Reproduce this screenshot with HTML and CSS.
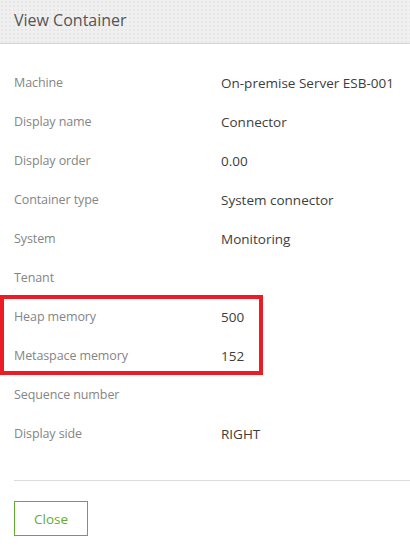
FILE: index.html
```html
<!DOCTYPE html>
<html>
<head>
<meta charset="utf-8">
<link rel="stylesheet" href="styles.css">
</head>
<body>
<div class="dialog">
  <div class="header"><h1 class="title">View Container</h1></div>
  <div class="body">
    <div class="row"><span class="label">Machine</span><span class="value">On-premise Server ESB-001</span></div>
    <div class="row"><span class="label">Display name</span><span class="value">Connector</span></div>
    <div class="row"><span class="label">Display order</span><span class="value">0.00</span></div>
    <div class="row"><span class="label">Container type</span><span class="value">System connector</span></div>
    <div class="row"><span class="label">System</span><span class="value">Monitoring</span></div>
    <div class="row"><span class="label">Tenant</span><span class="value"></span></div>
    <div class="row"><span class="label">Heap memory</span><span class="value">500</span></div>
    <div class="row"><span class="label">Metaspace memory</span><span class="value">152</span></div>
    <div class="row"><span class="label">Sequence number</span><span class="value"></span></div>
    <div class="row"><span class="label">Display side</span><span class="value">RIGHT</span></div>
  </div>
  <div class="footer"><button class="btn-close">Close</button></div>
  <div class="highlight"></div>
</div>
</body>
</html>
```
FILE: styles.css
```css
* { box-sizing: border-box; }
html, body { margin: 0; padding: 0; background: #fff; }
body { font-family: "Open Sans", "Noto Sans", sans-serif; }
.dialog { position: relative; width: 410px; height: 547px; overflow: hidden; }
.header {
  height: 44px;
  background-color: #f0f0f0;
  background-image: radial-gradient(#e6e6e6 0.7px, transparent 1px);
  background-size: 4px 4px;
  border-bottom: 1px solid #d6d6d6;
  display: flex;
  align-items: center;
  padding: 0 14px 4px;
}
.title { margin: 0; font-size: 16px; font-weight: 400; color: #555; }
.body { padding-top: 19px; }
.row { display: flex; height: 39px; align-items: center; }
.label { width: 221px; padding-left: 14px; color: #858585; font-size: 12.5px; letter-spacing: -0.1px; }
.value { color: #3d3d3d; font-size: 13.5px; }
.footer { margin: 27px 0 0 14px; border-top: 1px solid #dcdcdc; padding-top: 20px; }
.btn-close {
  display: block;
  width: 74px; height: 35px;
  background: #fff;
  border: 1px solid #62ae2e;
  color: #62ae2e;
  font-family: inherit;
  font-size: 13.5px;
  padding: 0;
  cursor: pointer;
}
.highlight {
  position: absolute;
  left: 0; top: 295px;
  width: 263px; height: 80px;
  border: 4px solid #ec1c24;
}
```
